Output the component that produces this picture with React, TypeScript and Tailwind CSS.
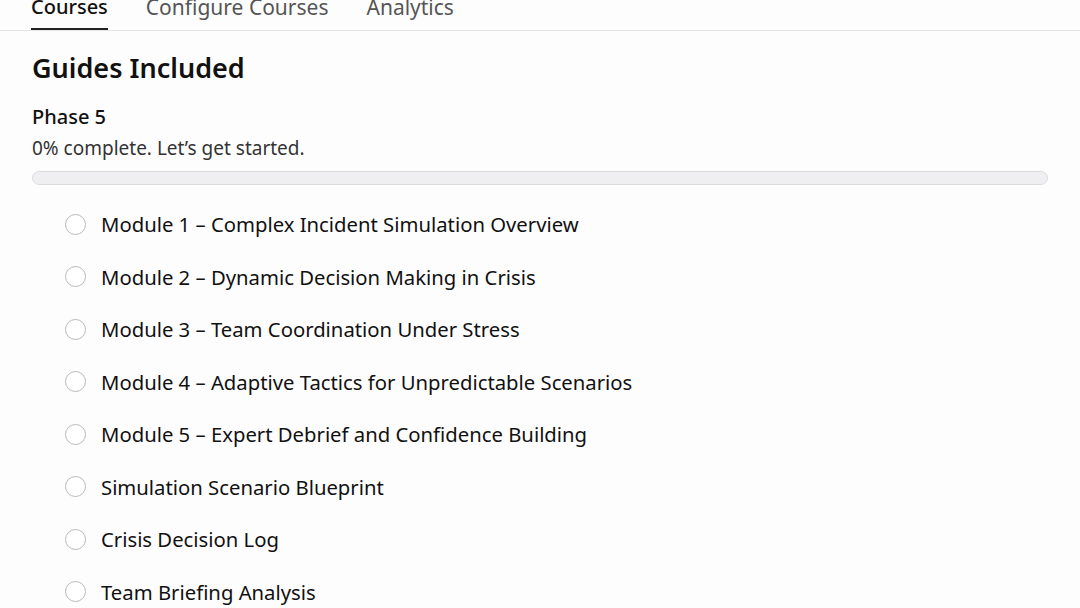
const tabs = ["Courses", "Configure Courses", "Analytics"];

const guides = [
  "Module 1 – Complex Incident Simulation Overview",
  "Module 2 – Dynamic Decision Making in Crisis",
  "Module 3 – Team Coordination Under Stress",
  "Module 4 – Adaptive Tactics for Unpredictable Scenarios",
  "Module 5 – Expert Debrief and Confidence Building",
  "Simulation Scenario Blueprint",
  "Crisis Decision Log",
  "Team Briefing Analysis",
];

export default function App() {
  return (
    <div className="h-[608px] w-[1080px] overflow-hidden bg-[#fefdfe] font-['Noto_Sans',sans-serif] text-[#111]">
      <nav className="-mt-[9px] flex items-end gap-[38px] border-b border-[#e6e6e8] px-[31px]">
        {tabs.map((tab, i) => (
          <div
            key={tab}
            className={
              i === 0
                ? "border-b-2 border-[#222] pb-[5px] text-[20px] leading-[32px] font-medium text-[#111]"
                : "pb-[7px] text-[21px] leading-[32px] text-[#555]"
            }
          >
            {tab}
          </div>
        ))}
      </nav>

      <main className="px-[32px] pt-[17px]">
        <h1 className="text-[27px] font-semibold leading-[40px]">Guides Included</h1>
        <h2 className="mt-[15px] text-[20px] font-medium leading-[28px]">Phase 5</h2>
        <p className="mt-[4px] text-[19px] leading-[26px] text-[#333]">0% complete. Let’s get started.</p>
        <div className="mt-[10px] h-[14px] w-[1016px] rounded-full border border-[#dcdbde] bg-[#efeef1]" />

        <ul className="mt-[13px] flex flex-col pl-[33px]">
          {guides.map((g) => (
            <li key={g} className="flex h-[52.5px] items-center gap-[15px]">
              <span className="h-[21px] w-[21px] shrink-0 rounded-full border border-[#b8b8bc] bg-white" />
              <span className="text-[20.3px] leading-[28px]">{g}</span>
            </li>
          ))}
        </ul>
      </main>
    </div>
  );
}
